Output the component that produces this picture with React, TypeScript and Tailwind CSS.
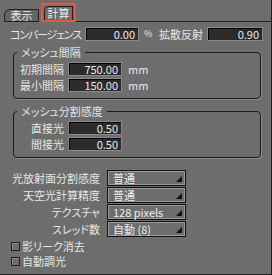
import React from 'react';

const font =
  "[font-family:'Noto_Sans_CJK_JP','Noto_Sans',sans-serif] [font-feature-settings:'palt']";

function NumField({ value, w }: { value: string; w: string }) {
  return (
    <div
      className={`${w} flex h-[14px] items-center justify-end border border-[#8a8a8a] bg-[#2b2b2b] pr-[3px] text-[11px] leading-none text-[#ececec] shadow-[inset_1px_1px_0_#000]`}
    >
      {value}
    </div>
  );
}

function Group({ title, children }: { title: string; children: React.ReactNode }) {
  return (
    <fieldset className="ml-[13px] w-[248px] rounded-[4px] border border-[#1c1c1c] pb-[6px] pl-[3px] shadow-[1px_1px_0_#8c8c8c]">
      <legend className="px-[4px] text-[11px] leading-[13px] text-[#e6e6e6]">{title}</legend>
      <div className="mt-[3px] flex flex-col gap-[2px]">{children}</div>
    </fieldset>
  );
}

function GroupRow({ label, value, unit }: { label: string; value: string; unit?: string }) {
  return (
    <div className="flex items-center">
      <span className="w-[47px] text-right text-[11px] leading-[14px] text-[#e6e6e6]">{label}</span>
      <div className="ml-[4px]">
        <NumField value={value} w="w-[54px]" />
      </div>
      {unit && <span className="ml-[6px] text-[11px] leading-[14px] text-[#e6e6e6]">{unit}</span>}
    </div>
  );
}

function Select({ label, value }: { label: string; value: string }) {
  return (
    <div className="flex items-center">
      <span className="w-[100px] text-right text-[11px] leading-[16px] text-[#e6e6e6]">{label}</span>
      <div className="ml-[7px] flex h-[16px] w-[79px] items-end justify-between border border-[#111] pl-[5px] pr-[3px] shadow-[inset_1px_1px_0_#9a9a9a,inset_-1px_-1px_0_#9a9a9a]">
        <span className="self-center text-[11px] leading-none text-[#ececec]">{value}</span>
        <svg width="6" height="6" viewBox="0 0 6 6" className="mb-[3px]">
          <path d="M6 0 L6 6 L0 6 Z" fill="#111" />
        </svg>
      </div>
    </div>
  );
}

function Check({ label }: { label: string }) {
  return (
    <div className="flex items-center pl-[11px]">
      <div className="h-[9px] w-[9px] border border-[#1e1e1e] bg-[#6d6d6d] shadow-[inset_1px_1px_0_#8f8f8f]" />
      <span className="ml-[2px] text-[11px] leading-[15px] text-[#e6e6e6]">{label}</span>
    </div>
  );
}

export default function App() {
  return (
    <div className={`${font} h-[275px] w-[272px] overflow-hidden border-b border-r border-[#1e1e1e] bg-[#6d6d6d]`}>
      {/* tab strip */}
      <div className="flex h-[22px] items-end pl-[4px]">
        <div className="flex h-[13px] w-[35px] items-center justify-center rounded-tl-[6px] border border-[#222] bg-[#646464] text-[11px] leading-none text-[#e6e6e6]">
          表示
        </div>
        <div className="ml-[2px] h-[19px] w-[35px] border-2 border-[#e4573f] px-[1px] pt-[1px]">
          <div className="flex h-full items-center justify-center rounded-tl-[5px] border-x border-t border-[#222] text-[11px] leading-none text-[#eeeeee]">
            計算
          </div>
        </div>
        <div className="h-px flex-1 bg-[#222]" />
      </div>

      {/* convergence / diffuse */}
      <div className="mt-[5px] flex items-center">
        <span className="w-[81px] text-right text-[11px] leading-[14px] tracking-[-1.2px] text-[#e6e6e6]">
          コンバージェンス
        </span>
        <div className="ml-[4px]">
          <NumField value="0.00" w="w-[54px]" />
        </div>
        <span className="w-[14px] pl-[5px] text-[9px] leading-[14px] text-[#e6e6e6]">%</span>
        <span className="w-[50px] text-right text-[11px] leading-[14px] text-[#e6e6e6]">拡散反射</span>
        <div className="ml-[4px]">
          <NumField value="0.90" w="w-[56px]" />
        </div>
      </div>

      <div className="mt-[5px]">
        <Group title="メッシュ間隔">
          <GroupRow label="初期間隔" value="750.00" unit="mm" />
          <GroupRow label="最小間隔" value="150.00" unit="mm" />
        </Group>
      </div>

      <div className="mt-[6px]">
        <Group title="メッシュ分割感度">
          <GroupRow label="直接光" value="0.50" />
          <GroupRow label="間接光" value="0.50" />
        </Group>
      </div>

      <div className="mt-[12px] flex flex-col gap-[1px]">
        <Select label="光放射面分割感度" value="普通" />
        <Select label="天空光計算精度" value="普通" />
        <Select label="テクスチャ" value="128 pixels" />
        <Select label="スレッド数" value="自動 (8)" />
      </div>

      <div className="mt-[2px] flex flex-col">
        <Check label="影リーク消去" />
        <Check label="自動調光" />
      </div>
    </div>
  );
}
